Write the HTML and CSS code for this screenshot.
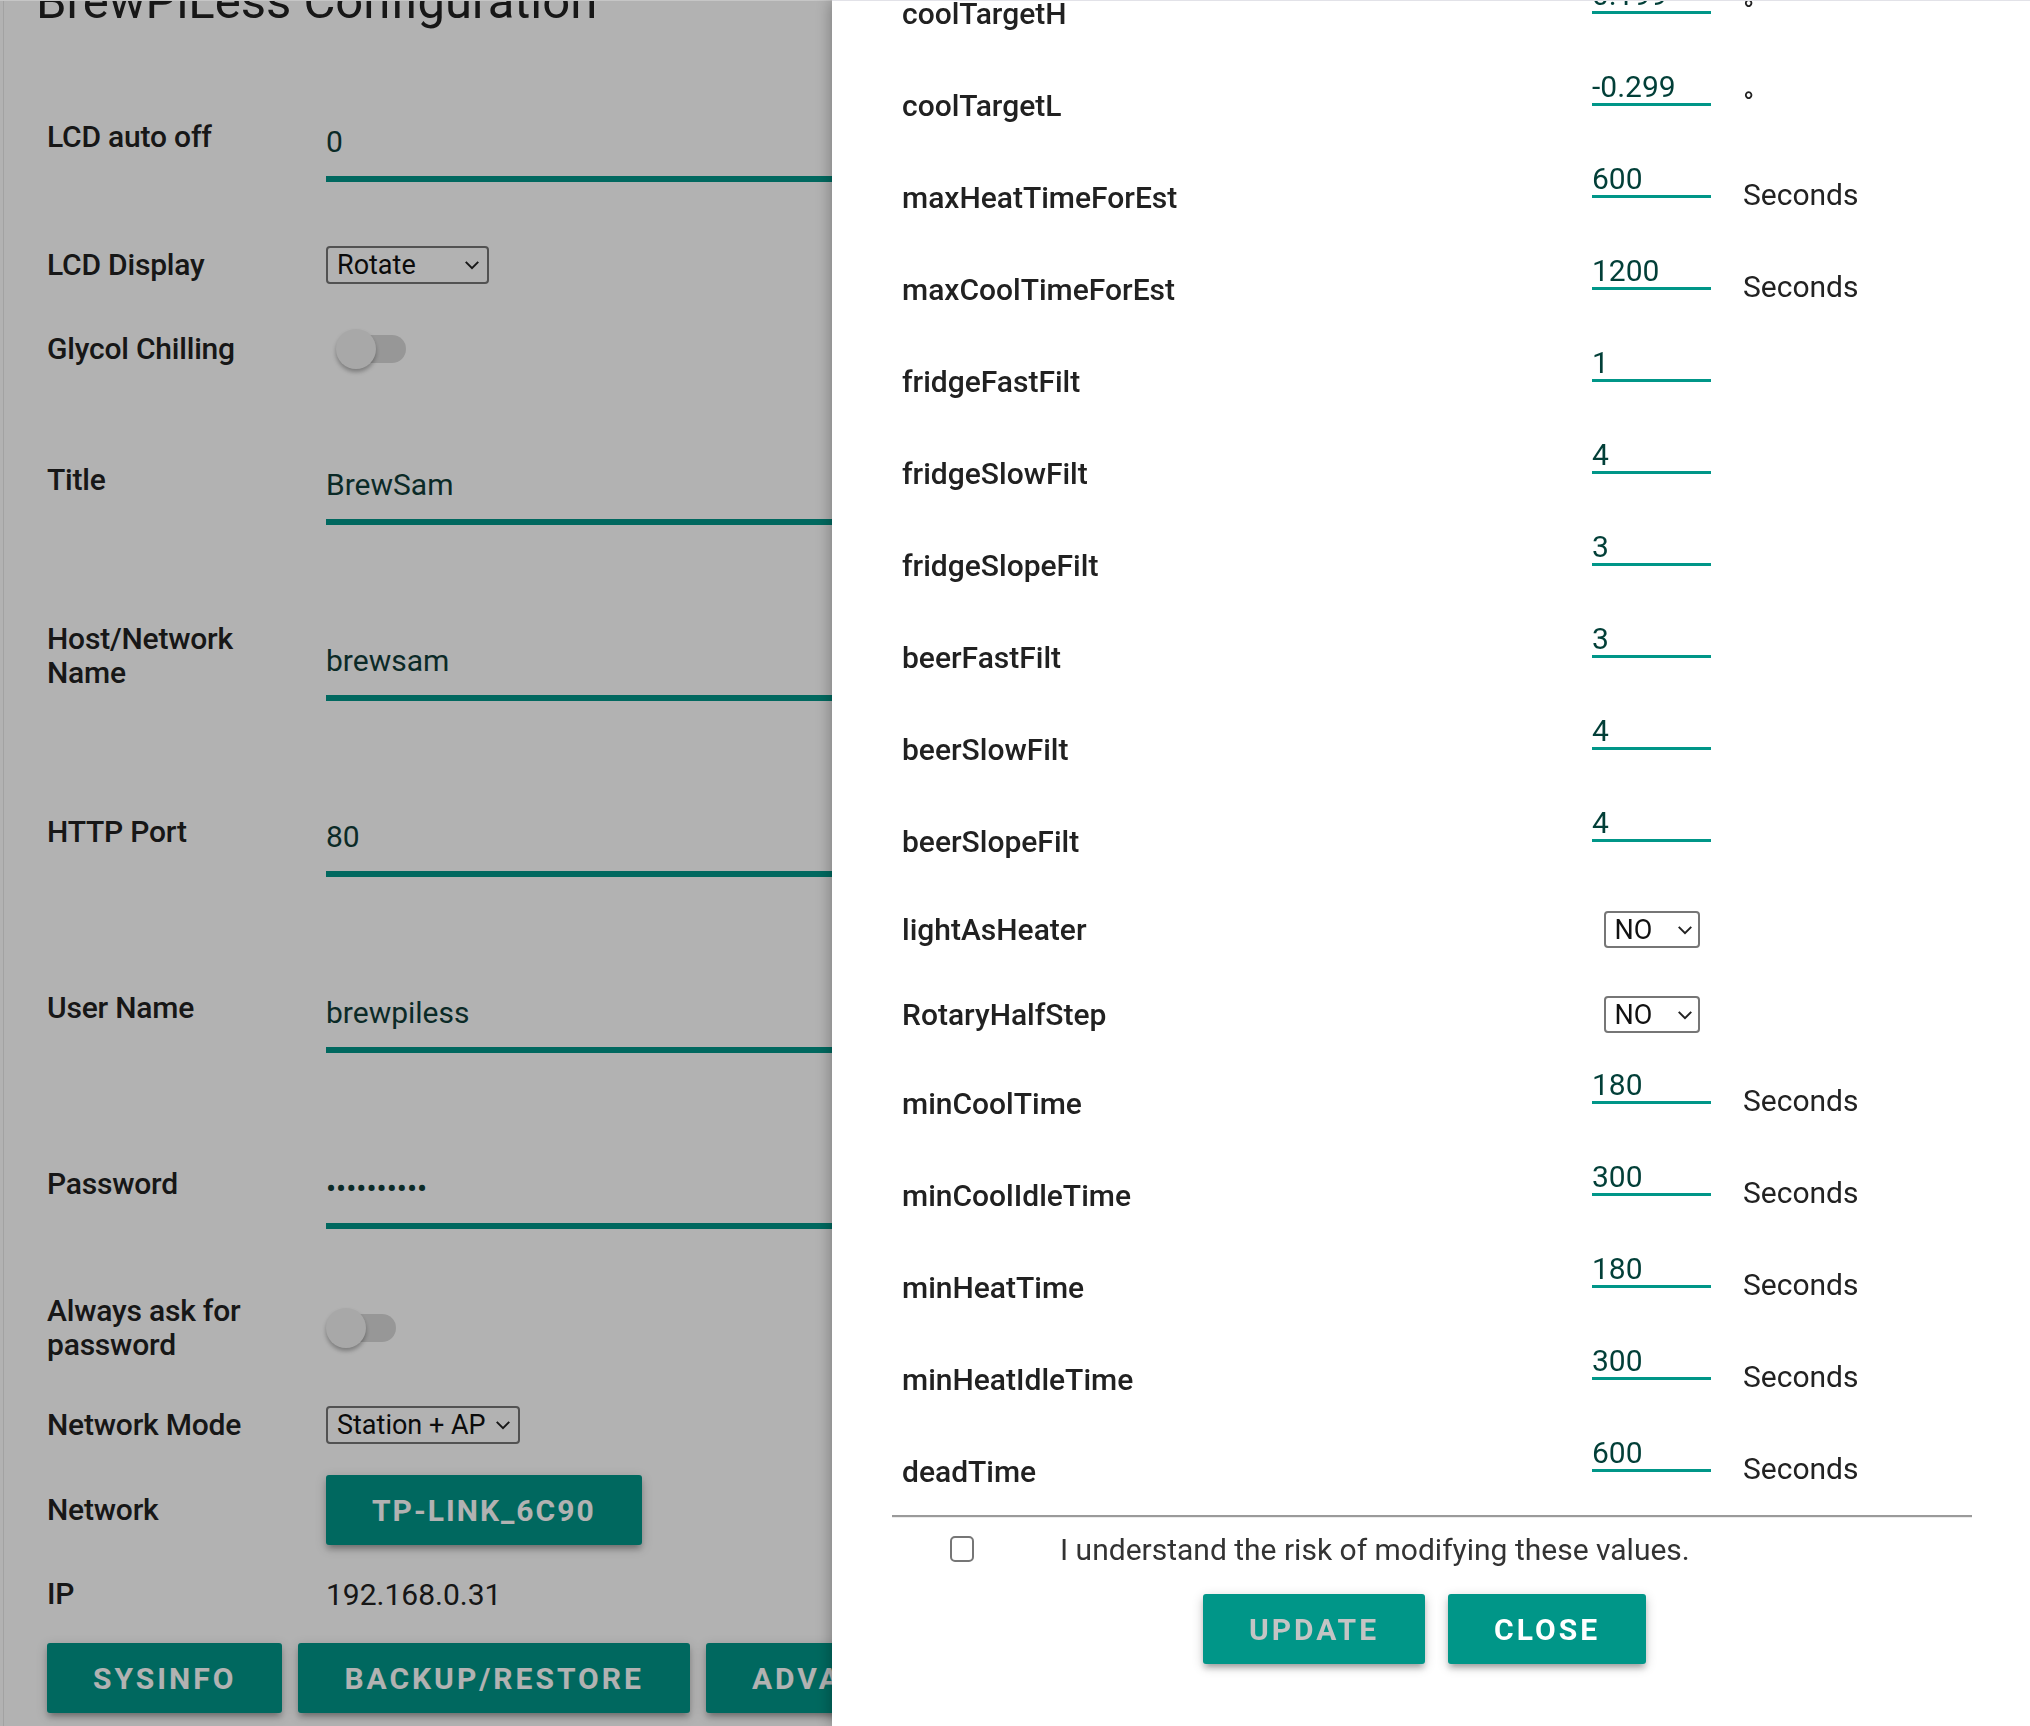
FILE: index.html
```html
<!DOCTYPE html>
<html lang="en">
<head>
    <meta charset="UTF-8">
    <meta name="viewport" content="width=device-width, initial-scale=1.0">
    <title>BrewPiLess Configuration</title>
    <link rel="stylesheet" href="styles.css">
</head>
<body>
<div class="page">
    <h4 class="page-title">BrewPiLess Configuration</h4>

    <div class="row row-input">
        <label>LCD auto off</label>
        <input type="text" class="field" value="0">
    </div>
    <div class="row row-select">
        <label>LCD Display</label>
        <div class="select sel-rotate">
            <select><option>Rotate</option></select>
            <svg viewBox="0 0 12 8"><path d="M1 1.5 L6 6.5 L11 1.5"/></svg>
        </div>
    </div>
    <div class="row row-switch">
        <label>Glycol Chilling</label>
        <div class="switch sw-glycol"><span class="track"></span><span class="knob"></span></div>
    </div>
    <div class="row row-input">
        <label>Title</label>
        <input type="text" class="field" value="BrewSam">
    </div>
    <div class="row row-input">
        <label>Host/Network Name</label>
        <input type="text" class="field" value="brewsam">
    </div>
    <div class="row row-input">
        <label>HTTP Port</label>
        <input type="text" class="field" value="80">
    </div>
    <div class="row row-input">
        <label>User Name</label>
        <input type="text" class="field" value="brewpiless">
    </div>
    <div class="row row-input">
        <label>Password</label>
        <input type="password" class="field" value="brewpiless">
    </div>
    <div class="row row-ask">
        <label>Always ask for password</label>
        <div class="switch"><span class="track"></span><span class="knob"></span></div>
    </div>
    <div class="row row-mode">
        <label>Network Mode</label>
        <div class="select sel-mode">
            <select><option>Station + AP</option></select>
            <svg viewBox="0 0 12 8"><path d="M1 1.5 L6 6.5 L11 1.5"/></svg>
        </div>
    </div>
    <div class="row row-net">
        <label>Network</label>
        <div><button class="btn btn-net">TP-LINK_6C90</button></div>
    </div>
    <div class="row row-ip">
        <label>IP</label>
        <span class="ip">192.168.0.31</span>
    </div>

    <div class="actions">
        <button class="btn">Sysinfo</button>
        <button class="btn">Backup/Restore</button>
        <button class="btn">Advanced</button>
    </div>
</div>

<div class="overlay"></div>

<div class="modal">
    <div class="modal-body">
        <div class="param"><span class="p-name">coolTargetH</span><span class="p-val"><input type="text" value="0.199"></span><span class="p-unit">°</span></div>
        <div class="param"><span class="p-name">coolTargetL</span><span class="p-val"><input type="text" value="-0.299"></span><span class="p-unit">°</span></div>
        <div class="param"><span class="p-name">maxHeatTimeForEst</span><span class="p-val"><input type="text" value="600"></span><span class="p-unit">Seconds</span></div>
        <div class="param"><span class="p-name">maxCoolTimeForEst</span><span class="p-val"><input type="text" value="1200"></span><span class="p-unit">Seconds</span></div>
        <div class="param"><span class="p-name">fridgeFastFilt</span><span class="p-val"><input type="text" value="1"></span><span class="p-unit"></span></div>
        <div class="param"><span class="p-name">fridgeSlowFilt</span><span class="p-val"><input type="text" value="4"></span><span class="p-unit"></span></div>
        <div class="param"><span class="p-name">fridgeSlopeFilt</span><span class="p-val"><input type="text" value="3"></span><span class="p-unit"></span></div>
        <div class="param"><span class="p-name">beerFastFilt</span><span class="p-val"><input type="text" value="3"></span><span class="p-unit"></span></div>
        <div class="param"><span class="p-name">beerSlowFilt</span><span class="p-val"><input type="text" value="4"></span><span class="p-unit"></span></div>
        <div class="param"><span class="p-name">beerSlopeFilt</span><span class="p-val"><input type="text" value="4"></span><span class="p-unit"></span></div>
        <div class="param param-sel"><span class="p-name">lightAsHeater</span>
            <span class="p-val"><span class="select sel-no"><select><option>NO</option></select><svg viewBox="0 0 12 8"><path d="M1 1.5 L6 6.5 L11 1.5"/></svg></span></span><span class="p-unit"></span></div>
        <div class="param param-sel"><span class="p-name">RotaryHalfStep</span>
            <span class="p-val"><span class="select sel-no"><select><option>NO</option></select><svg viewBox="0 0 12 8"><path d="M1 1.5 L6 6.5 L11 1.5"/></svg></span></span><span class="p-unit"></span></div>
        <div class="param"><span class="p-name">minCoolTime</span><span class="p-val"><input type="text" value="180"></span><span class="p-unit">Seconds</span></div>
        <div class="param"><span class="p-name">minCoolIdleTime</span><span class="p-val"><input type="text" value="300"></span><span class="p-unit">Seconds</span></div>
        <div class="param"><span class="p-name">minHeatTime</span><span class="p-val"><input type="text" value="180"></span><span class="p-unit">Seconds</span></div>
        <div class="param"><span class="p-name">minHeatIdleTime</span><span class="p-val"><input type="text" value="300"></span><span class="p-unit">Seconds</span></div>
        <div class="param"><span class="p-name">deadTime</span><span class="p-val"><input type="text" value="600"></span><span class="p-unit">Seconds</span></div>
    </div>
    <hr>
    <div class="agree">
        <input type="checkbox" class="chk">
        <span>I understand the risk of modifying these values.</span>
    </div>
    <div class="modal-btns">
        <button class="btn btn-update">Update</button>
        <button class="btn btn-close">Close</button>
    </div>
</div>
</body>
</html>
```

FILE: styles.css
```css
*{
    box-sizing:border-box;
}
body{
    margin:0;
    width:2030px;
    height:1726px;
    overflow:hidden;
    background:#fff;
    font-family:Roboto, "Noto Sans", sans-serif;
    color:#212121;
}

/* page behind the modal */
.page{
    margin-left:3px;
    border-left:1px solid #e8e8e8;
    padding-left:43px;
    height:1760px;
}
.page-title{
    margin:-26px 0 19px -11px;
    font-size:49px;
    font-weight:400;
    line-height:56px;
}
.row{
    display:grid;
    grid-template-columns:270px 1fr;
    column-gap:9px;
    align-items:center;
}
.row label{
    font-size:30px;
    font-weight:500;
    line-height:34px;
    letter-spacing:-0.2px;
}
.row-input{ height:176px; }
.row-select{ height:80px; }
.row-switch{ height:87px; }
.row-ask{ height:112px; }
.row-mode{ height:82px; }
.row-net{ height:88px; }
.row-ip{ height:80px; }

.field{
    width:100%;
    height:76px;
    margin-top:14px;
    padding:0;
    border:0;
    border-bottom:6px solid #009688;
    background:transparent;
    font-family:Roboto, sans-serif;
    font-size:30px;
    color:#103d38;
    outline:none;
}
.ip{
    font-size:30px;
}

.select{
    position:relative;
    display:inline-block;
}
.select select{
    -webkit-appearance:none;
    appearance:none;
    width:100%;
    height:100%;
    padding:0 0 0 9px;
    border:2px solid #767676;
    border-radius:4px;
    background:#fff;
    font-family:Roboto, sans-serif;
    font-size:27px;
    color:#111;
}
.select svg{
    position:absolute;
    right:8px;
    top:50%;
    width:18px;
    height:10px;
    margin-top:-5px;
    fill:none;
    stroke:#222;
    stroke-width:1.6;
}
.sel-rotate{ width:163px; height:38px; }
.sel-mode{ width:194px; height:38px; }
.sel-no{ width:96px; height:37px; }
.sel-no svg{ right:6px; width:18px; }

.switch{
    position:relative;
    width:70px;
    height:40px;
}
.sw-glycol{ margin-left:10px; }
.switch .track{
    position:absolute;
    left:18px;
    top:6px;
    width:52px;
    height:28px;
    border-radius:14px;
    background:#d9d9d9;
}
.switch .knob{
    position:absolute;
    left:0;
    top:0;
    width:40px;
    height:40px;
    border-radius:50%;
    background:#f1f1f1;
    box-shadow:0 3px 4px rgba(0,0,0,.3);
}

.btn{
    display:inline-flex;
    align-items:center;
    justify-content:center;
    height:70px;
    padding:0 46px;
    border:0;
    border-radius:3px;
    background:#009688;
    color:#fff;
    font-family:Roboto, sans-serif;
    font-size:30px;
    font-weight:700;
    letter-spacing:3px;
    text-transform:uppercase;
    white-space:nowrap;
    box-shadow:0 5px 5px rgba(0,0,0,.14), 0 7px 3px -5px rgba(0,0,0,.12), 0 3px 12px rgba(0,0,0,.2);
}
.btn-net{
    letter-spacing:2px;
}
.actions{
    display:flex;
    gap:16px;
    margin-top:9px;
}

.overlay{
    position:fixed;
    top:0;
    left:0;
    right:0;
    bottom:0;
    border-top:1px solid #c6c6c6;
    background:rgba(0,0,0,.3);
}

/* modal */
.modal{
    position:fixed;
    top:0;
    left:832px;
    right:0;
    bottom:0;
    padding:0 58px 0 60px;
    border-top:1px solid #e2e2e8;
    background:#fff;
    box-shadow:0 0 16px rgba(0,0,0,.35);
    overflow:hidden;
}
.modal-body{
    margin-top:-34px;
}
.param{
    display:grid;
    grid-template-columns:690px 119px 1fr;
    align-items:center;
    height:92px;
    padding-left:10px;
}
.param-sel{ height:85px; }
.p-name{
    font-size:30px;
    font-weight:500;
    color:#212121;
}
.p-val{
    text-align:center;
}
.p-val input{
    display:block;
    width:119px;
    height:37px;
    margin-bottom:35px;
    padding:0;
    border:0;
    border-bottom:3px solid #009688;
    background:transparent;
    font-family:Roboto, sans-serif;
    font-size:30px;
    color:#023f38;
    outline:none;
}
.p-unit{
    padding-left:32px;
    margin-bottom:6px;
    font-size:30px;
    color:#222;
}
.modal hr{
    margin:-2px 0 0;
    border:0;
    border-top:2px solid #9a9a9a;
    border-bottom:1px solid #ececec;
}
.agree{
    display:flex;
    align-items:center;
    height:62px;
    font-size:30px;
    color:#333;
}
.chk{
    -webkit-appearance:none;
    appearance:none;
    width:24px;
    height:26px;
    margin:0 86px 0 58px;
    border:2px solid #767676;
    border-radius:5px;
    background:#fff;
}
.modal-btns{
    display:flex;
    justify-content:center;
    gap:23px;
    margin-top:14px;
    padding-right:15px;
}
.btn-update{ color:#c4c4c4; }
.btn-close{ color:#fff; }
```
